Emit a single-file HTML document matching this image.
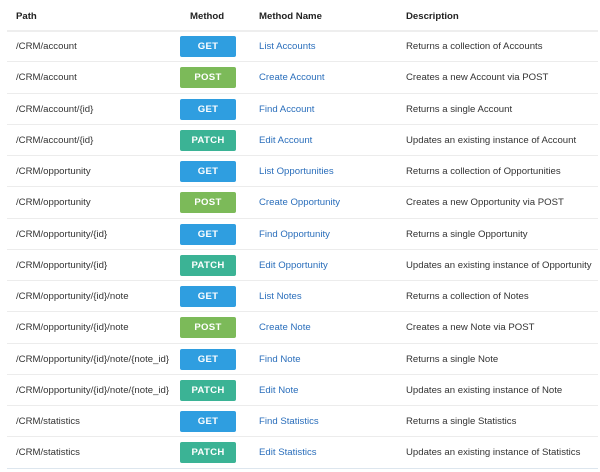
<!DOCTYPE html>
<html><head><style>
body{margin:0;width:600px;height:472px;background:#fff;font-family:"Liberation Sans",Arial,sans-serif;font-size:9.6px;color:#333;position:relative;overflow:hidden}
.r{position:absolute;left:7px;width:591px;height:31px;border-bottom:1px solid #ececec}
.r span{position:absolute;top:0;line-height:32px;white-space:nowrap}
.p{left:9px}.n{left:252px;color:#2a6ebb}.d{left:399px}
.b{position:absolute;left:173px;top:5px;width:56px;height:21px;border-radius:2px;color:#fff;font-weight:bold;font-size:9.6px;text-align:center;line-height:21px;letter-spacing:.3px}
.GET{background:#2f9ee0}.POST{background:#7cba59}.PATCH{background:#3bb395}
.h span{font-weight:bold;color:#222}
</style></head><body>
<div class="r h" style="top:0;height:30px;border-bottom:2px solid #eee"><span class="p" style="line-height:34px">Path</span><span style="left:183px;line-height:34px">Method</span><span class="n" style="color:#222;line-height:34px">Method Name</span><span class="d" style="line-height:34px">Description</span></div>
<div id="rows"></div>
<script>
var d=[["/CRM/account","GET","List Accounts","Returns a collection of Accounts"],
["/CRM/account","POST","Create Account","Creates a new Account via POST"],
["/CRM/account/{id}","GET","Find Account","Returns a single Account"],
["/CRM/account/{id}","PATCH","Edit Account","Updates an existing instance of Account"],
["/CRM/opportunity","GET","List Opportunities","Returns a collection of Opportunities"],
["/CRM/opportunity","POST","Create Opportunity","Creates a new Opportunity via POST"],
["/CRM/opportunity/{id}","GET","Find Opportunity","Returns a single Opportunity"],
["/CRM/opportunity/{id}","PATCH","Edit Opportunity","Updates an existing instance of Opportunity"],
["/CRM/opportunity/{id}/note","GET","List Notes","Returns a collection of Notes"],
["/CRM/opportunity/{id}/note","POST","Create Note","Creates a new Note via POST"],
["/CRM/opportunity/{id}/note/{note_id}","GET","Find Note","Returns a single Note"],
["/CRM/opportunity/{id}/note/{note_id}","PATCH","Edit Note","Updates an existing instance of Note"],
["/CRM/statistics","GET","Find Statistics","Returns a single Statistics"],
["/CRM/statistics","PATCH","Edit Statistics","Updates an existing instance of Statistics"]];
var h="";d.forEach(function(x,i){var t=31+i*31.25;h+='<div class="r" style="top:'+t+'px;height:30.25px'+(i==13?';border-bottom-color:#dde6ee':'')+'"><span class="p">'+x[0]+'</span><div class="b '+x[1]+'">'+x[1]+'</div><span class="n">'+x[2]+'</span><span class="d">'+x[3]+'</span></div>';});
document.getElementById("rows").innerHTML=h;
</script>
</body></html>
